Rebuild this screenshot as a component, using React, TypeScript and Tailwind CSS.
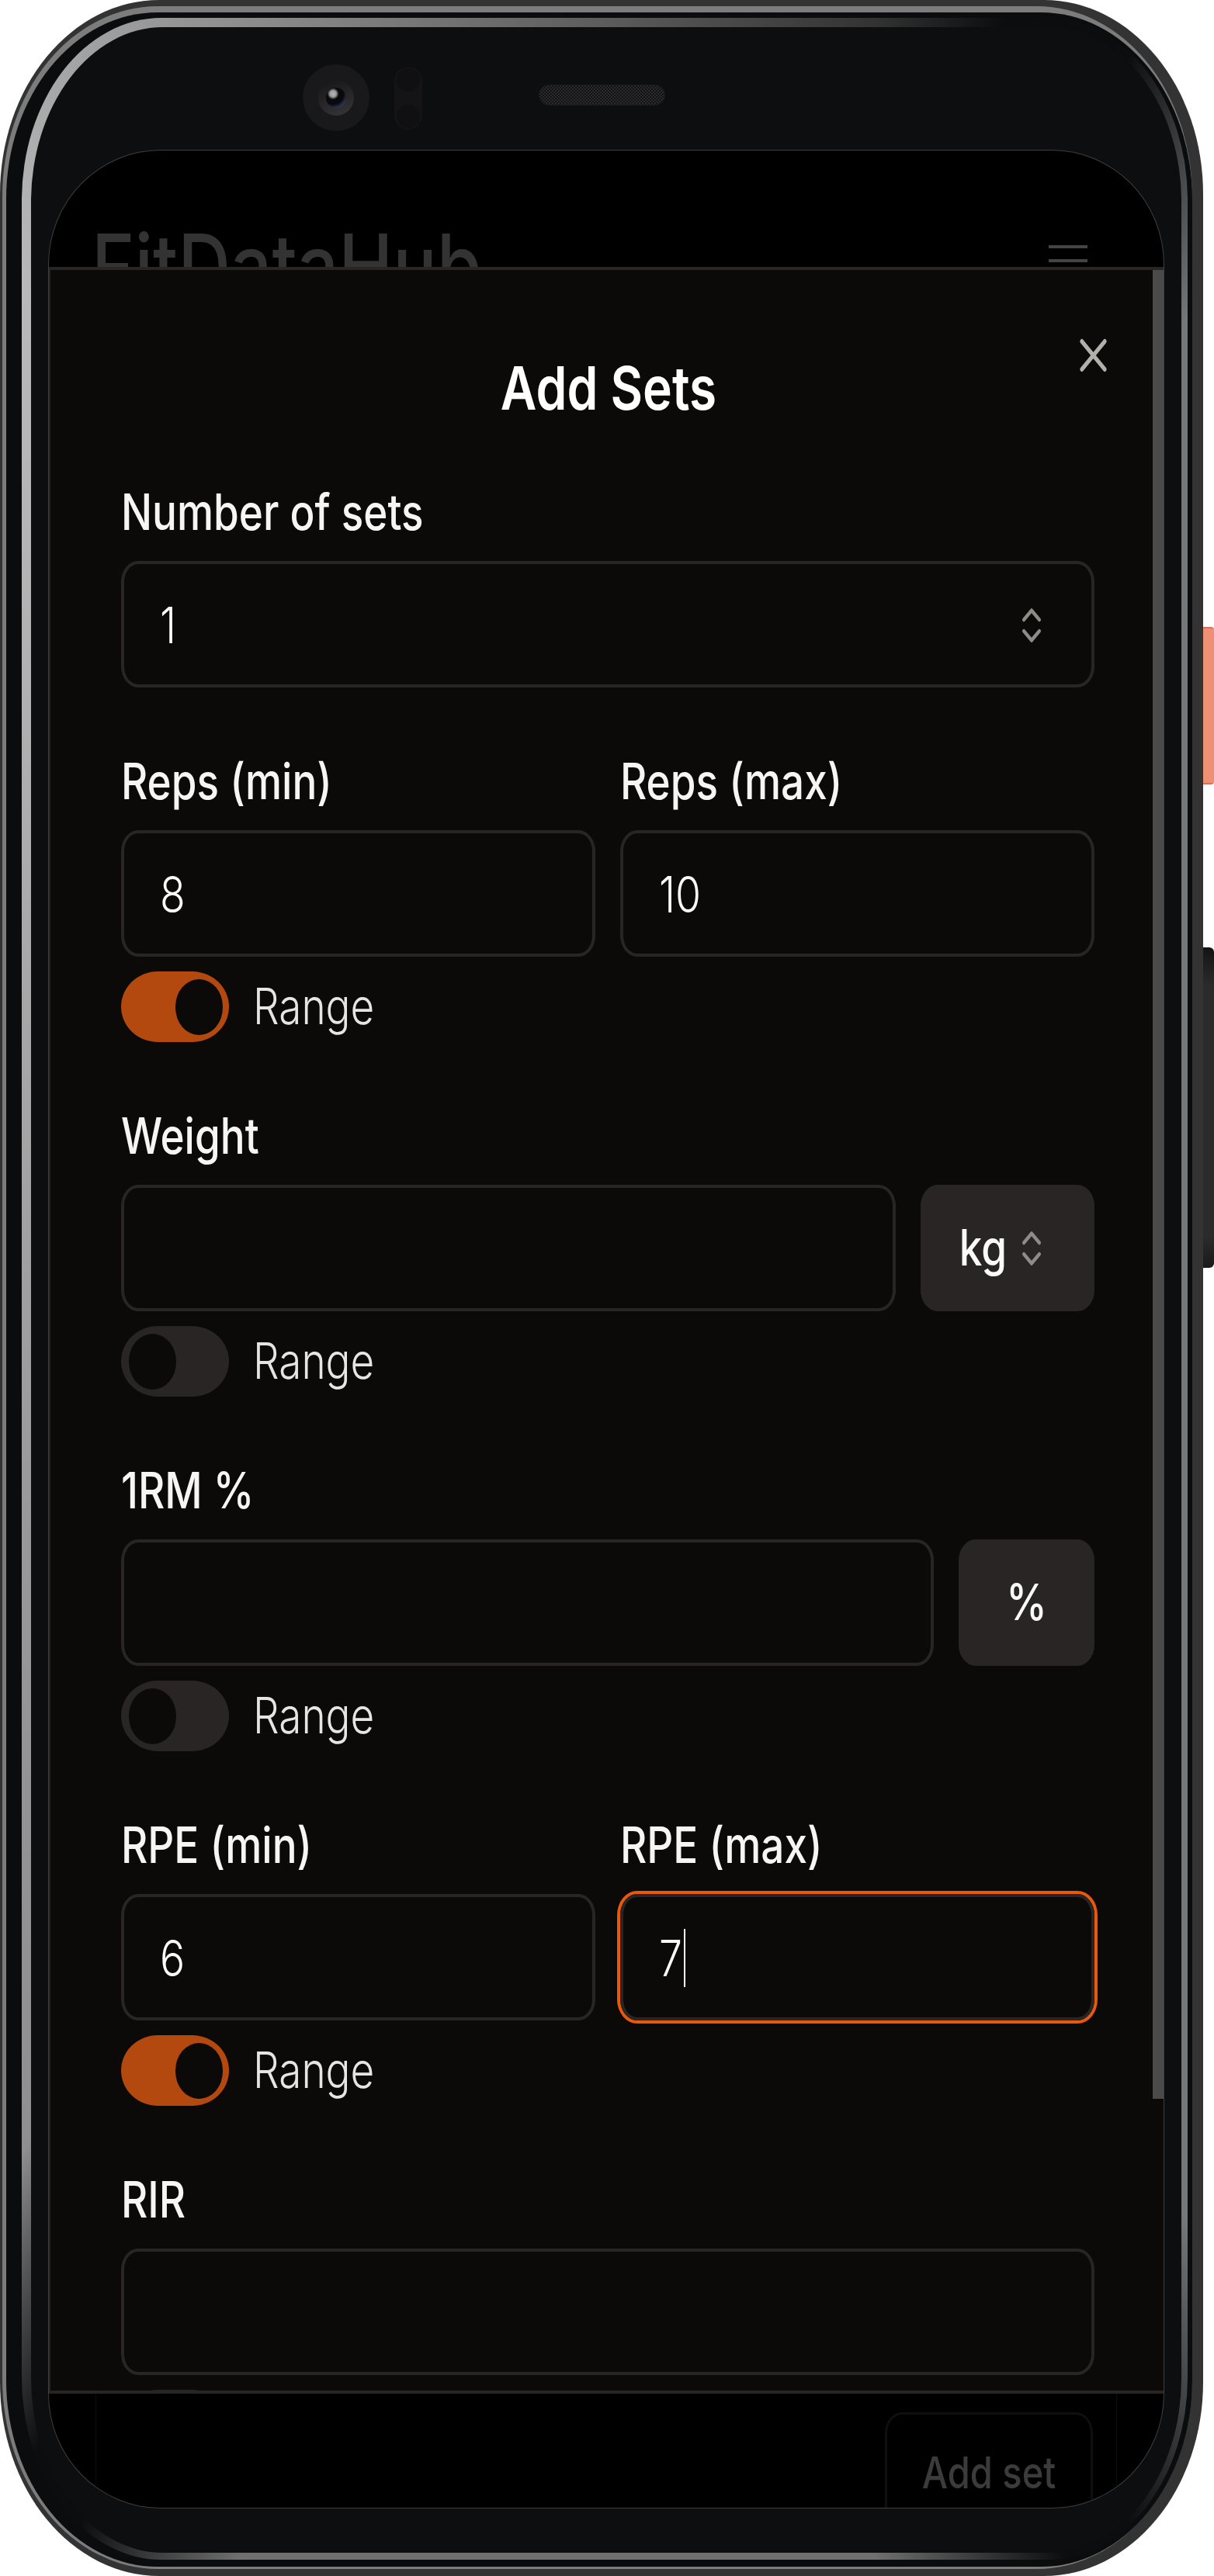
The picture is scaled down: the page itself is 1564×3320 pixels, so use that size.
import { ChevronsUpDown, X } from "lucide-react";
import { clsx } from "clsx";

const font = { fontFamily: "Inter, 'Noto Sans', sans-serif" };

/** text is stretched vertically in the source screenshot */
function Txt({ children, className }: { children: React.ReactNode; className?: string }) {
  return <span className={clsx("inline-block scale-y-[1.21] leading-none whitespace-nowrap", className)}>{children}</span>;
}

function Label({ children }: { children: string }) {
  return (
    <div className="h-[70px] mb-[27px] pb-[2px] flex items-center">
      <Txt className="text-[53px] font-medium text-[#f5f5f4]">{children}</Txt>
    </div>
  );
}

function Box({
  value,
  focused,
  children,
  className,
}: {
  value?: string;
  focused?: boolean;
  children?: React.ReactNode;
  className?: string;
}) {
  return (
    <div
      className={clsx(
        "h-[163px] flex items-center pl-[46px] pr-[53px] pt-[2px] border-[4px] border-[#292524] rounded-[22px/27px]",
        focused && "ring-[4px] ring-[#ea580c]",
        className,
      )}
    >
      {value && <Txt className="text-[53.5px] font-light text-[#fafaf9]">{value}</Txt>}
      {focused && <span className="ml-[2px] w-[2px] h-[75px] bg-white" />}
      {children}
    </div>
  );
}

function Updown() {
  return <ChevronsUpDown preserveAspectRatio="none" className="w-[48px] h-[58px] text-[#8f8b87] shrink-0" />;
}

function RangeToggle({ on, label = true }: { on?: boolean; label?: boolean }) {
  return (
    <div className="mt-[19px] flex items-center gap-[31px]">
      <div
        className={clsx(
          "w-[139px] h-[91px] flex items-center rounded-[48px/46px]",
          on ? "bg-[#b4490f] justify-end pr-[8px]" : "bg-[#292524] pl-[10px]",
        )}
      >
        <div className="w-[61px] h-[72px] rounded-[31px/36px] bg-[#0c0a09]" />
      </div>
      {label && <Txt className="text-[53px] font-light text-[#e7e5e4]">Range</Txt>}
    </div>
  );
}

function UnitButton({ children, className }: { children: React.ReactNode; className?: string }) {
  return (
    <div className={clsx("h-[163px] shrink-0 flex items-center bg-[#292524] rounded-[22px/27px]", className)}>
      {children}
    </div>
  );
}

function Camera() {
  return (
    <div className="flex items-start pt-[48px] pl-[328px] h-[158px]">
      <div className="w-[86px] h-[86px] rounded-full bg-[#19191b] flex items-center justify-center">
        <div className="w-[46px] h-[46px] rounded-full bg-[linear-gradient(160deg,#141416,#37373a)] flex items-center justify-center">
          <div className="w-[26px] h-[26px] rounded-full bg-[radial-gradient(circle_at_35%_30%,#b5b5b5_0,#a0a0a0_16%,#0a0a0e_30%,#0a0a0e_55%,#3d4b74_85%)]" />
        </div>
      </div>
      <div className="ml-[32px] mt-[3px] w-[36px] h-[81px] rounded-full bg-[#141416] flex flex-col items-center justify-between py-[2px]">
        <div className="w-[30px] h-[30px] rounded-full bg-[#101012]" />
        <div className="w-[30px] h-[30px] rounded-full bg-[#101012]" />
      </div>
      <div className="ml-[150px] mt-[26px] w-[163px] h-[27px] rounded-full border border-[#1c1c1e] bg-[repeating-conic-gradient(#2a2a2a_0_25%,#131315_0_50%)] bg-[length:4px_4px]" />
    </div>
  );
}

function Modal() {
  return (
    <div className="absolute left-0 right-0 top-[150px] bottom-[147px] flex bg-[#0c0a09] border-y-[4px] border-l-[2px] border-[#292524]">
      <div className="flex-1 overflow-hidden pl-[91px] pr-[75px] pt-[112px]">
        <div className="h-[80px] flex items-center justify-center pl-[2px] mb-[86px]">
          <Txt className="text-[64px] font-semibold text-white">Add Sets</Txt>
        </div>
        <div className="flex flex-col gap-[87px]">
          <div>
            <Label>Number of sets</Label>
            <Box value="1" className="justify-between">
              <Updown />
            </Box>
          </div>
          <div>
            <div className="grid grid-cols-[611px_1fr] gap-x-[32px]">
              <div>
                <Label>Reps (min)</Label>
                <Box value="8" />
              </div>
              <div>
                <Label>Reps (max)</Label>
                <Box value="10" />
              </div>
            </div>
            <RangeToggle on />
          </div>
          <div>
            <Label>Weight</Label>
            <div className="flex gap-[32px]">
              <Box className="flex-1" />
              <UnitButton className="w-[224px] justify-end gap-[8px] pr-[57px]">
                <Txt className="text-[53px] font-medium text-[#fafaf9]">kg</Txt>
                <Updown />
              </UnitButton>
            </div>
            <RangeToggle />
          </div>
          <div>
            <Label>1RM %</Label>
            <div className="flex gap-[32px]">
              <Box className="flex-1" />
              <UnitButton className="w-[175px] justify-center">
                <Txt className="text-[53px] font-medium text-[#fafaf9]">%</Txt>
              </UnitButton>
            </div>
            <RangeToggle />
          </div>
          <div>
            <div className="grid grid-cols-[611px_1fr] gap-x-[32px]">
              <div>
                <Label>RPE (min)</Label>
                <Box value="6" />
              </div>
              <div>
                <Label>RPE (max)</Label>
                <Box value="7" focused />
              </div>
            </div>
            <RangeToggle on />
          </div>
          <div>
            <Label>RIR</Label>
            <Box />
            <RangeToggle label={false} />
          </div>
        </div>
      </div>
      {/* scrollbar */}
      <div className="w-[14px] shrink-0">
        <div className="h-[2357px] bg-[#4a4a4a]" />
      </div>
      <div className="absolute top-[74px] right-[61px]">
        <X preserveAspectRatio="none" className="w-[59px] h-[72px] text-[#b3b0ab]" />
      </div>
    </div>
  );
}

export default function App() {
  return (
    <div className="flex w-[1564px] h-[3320px] bg-white overflow-hidden" style={font}>
      {/* phone frame */}
      <div className="w-[1550px] h-[3320px] shrink-0 bg-[#333333] rounded-[205px/250px] pt-[8px] pr-[14px] pb-[9px] pl-[3px]">
        <div className="h-full bg-[#7c7c7c] rounded-[200px/245px] pt-[8px] pb-[3px] pl-[5px]">
          <div className="h-full bg-[#0b0c0e] rounded-[195px/240px] pt-[7px] pr-[6px] pb-[9px] pl-[20px]">
            <div className="h-full rounded-[180px/235px] pt-[12px] pr-[8px] pb-[9px] pl-[12px] bg-[conic-gradient(#5c5c5c_0deg,#333_12deg,#0c0d0f_17.5deg,#0c0d0f_23deg,#777_31deg,#777_148deg,#0c0d0f_157deg,#0c0d0f_160deg,#707070_168deg,#707070_196deg,#0c0d0f_203deg,#0c0d0f_206deg,#8f8f8f_214deg,#a8a8a8_300deg,#b8b8b8_330deg,#5c5c5c_360deg)]">
              <div className="h-full bg-[#0d0e10] rounded-[170px/225px] px-[22px] pb-[57px] flex flex-col">
                <Camera />
                {/* screen */}
                <div className="relative flex-1 flex flex-col bg-black rounded-[145px/148px] border border-[#3f3f3f] overflow-hidden">
                  <div className="flex justify-between items-start pl-[55px] pr-[98px] pt-[92px]">
                    <Txt className="origin-top text-[94px] font-medium text-[#333333]">FitDataHub</Txt>
                    <div className="flex flex-col gap-[14px] pt-[30px]">
                      <div className="w-[50px] h-[4px] bg-[#444444]" />
                      <div className="w-[50px] h-[4px] bg-[#444444]" />
                      <div className="w-[50px] h-[4px] bg-[#444444]" />
                    </div>
                  </div>
                  <div className="flex-1" />
                  <div className="h-[147px] mx-[60px] border-x border-[#0e0e0e] flex justify-end pt-[24px] pr-[30px]">
                    <div className="w-[268px] h-[170px] flex items-start justify-center pt-[50px] border-[3px] border-[#0f0f0f] rounded-[22px/27px]">
                      <Txt className="text-[47px] font-medium text-[#3b3b3b]">Add set</Txt>
                    </div>
                  </div>
                  <Modal />
                </div>
              </div>
            </div>
          </div>
        </div>
      </div>
      {/* side buttons */}
      <div className="w-[14px] shrink-0 pt-[808px] flex flex-col gap-[210px]">
        <div className="h-[203px] rounded-r-[4px] bg-[#ef8f76] border-y-[2px] border-[#d8705a]" />
        <div className="h-[413px] rounded-r-[6px] bg-[linear-gradient(180deg,#141414,#2b2b2b_12%,#2b2b2b_90%,#1a1a1a)]" />
      </div>
    </div>
  );
}
